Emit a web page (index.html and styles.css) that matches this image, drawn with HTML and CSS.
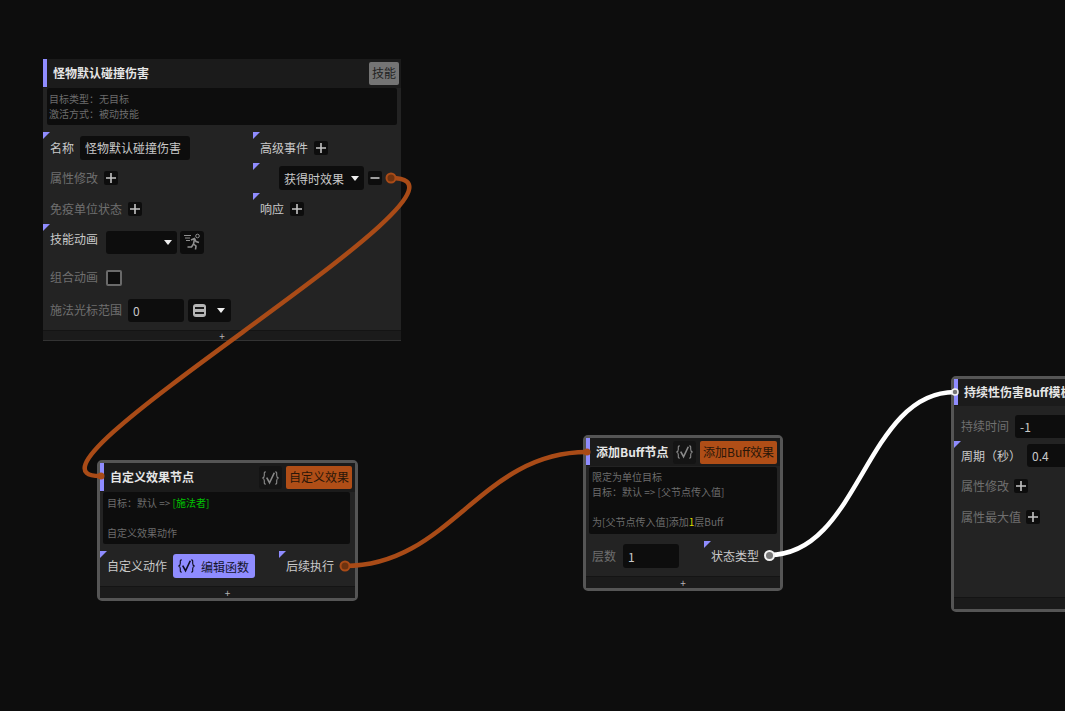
FILE: index.html
```html
<!DOCTYPE html>
<html lang="zh-CN">
<head>
 <meta charset="UTF-8">
 <meta name="viewport" content="width=device-width, initial-scale=1.0">
 <title>技能节点图</title>
 <link rel="stylesheet" href="styles.css">
</head>
<body>
 <svg class="defs" width="0" height="0">
  <symbol id="ico-plus" viewBox="0 0 14 14"><path d="M7 2v10M2 7h10" fill="none" stroke="currentColor" stroke-width="1.6"/></symbol>
  <symbol id="ico-minus" viewBox="0 0 14 14"><path d="M2.5 7h9" fill="none" stroke="currentColor" stroke-width="1.6"/></symbol>
  <symbol id="ico-func" viewBox="0 0 20 16">
   <path d="M5 1.5C3 1.5 3.5 3 3.5 5S3.5 7.500 1.500 8C3.500 8.500 3.500 9 3.500 11S3 14.500 5 14.500M15 1.500C17 1.500 16.500 3 16.500 5S16.500 7.500 18.500 8C16.500 8.500 16.500 9 16.500 11S17 14.500 15 14.500" fill="none" stroke="currentColor" stroke-width="1.2"/>
   <path d="M6 7.500L9 13L14 2.500" fill="none" stroke="currentColor" stroke-width="1.7"/>
  </symbol>
  <symbol id="ico-run" viewBox="0 0 18 18">
   <circle cx="14.500" cy="3" r="1.800" fill="none" stroke="currentColor" stroke-width="1"/>
   <path d="M1 2.500h7M2 5h5M3 7.500h4" fill="none" stroke="currentColor" stroke-width="1"/>
   <path d="M8 7L11.500 5.500L13 8.500L16 9.500M11.500 6L10.500 11L13 13L12.500 16.500M10.500 11L8.500 14L4.500 14" fill="none" stroke="currentColor" stroke-width="1.6"/>
  </symbol>
 </svg>

 <!-- 怪物默认碰撞伤害 -->
 <section class="node node-skill">
  <header class="head">
   <span class="accent"></span>
   <span class="title">怪物默认碰撞伤害</span>
   <span class="tag tag-grey">技能</span>
  </header>
  <div class="desc">
   <div>目标类型：无目标</div>
   <div>激活方式：被动技能</div>
  </div>
  <div class="skill-grid">
   <div class="field mark r1"><span class="label">名称</span><span class="box box-name">怪物默认碰撞伤害</span></div>
   <div class="field mark r1 col2"><span class="label">高级事件</span><span class="btn"><svg class="ico"><use href="#ico-plus"/></svg></span></div>
   <div class="field r2"><span class="label dim">属性修改</span><span class="btn"><svg class="ico"><use href="#ico-plus"/></svg></span></div>
   <div class="field mark r2 col2 event">
    <span class="box box-event">获得时效果<i class="caret"></i></span>
    <span class="btn"><svg class="ico"><use href="#ico-minus"/></svg></span>
   </div>
   <div class="field r3"><span class="label dim">免疫单位状态</span><span class="btn"><svg class="ico"><use href="#ico-plus"/></svg></span></div>
   <div class="field mark r3 col2"><span class="label">响应</span><span class="btn"><svg class="ico"><use href="#ico-plus"/></svg></span></div>
   <div class="field mark r4 wide">
    <span class="label anim-label">技能动画</span>
    <span class="box box-anim"><i class="caret"></i></span>
    <span class="box box-run"><svg class="ico-run"><use href="#ico-run"/></svg></span>
   </div>
   <div class="field r5 wide"><span class="label dim combo-label">组合动画</span><span class="check"></span></div>
   <div class="field r6 wide">
    <span class="label dim">施法光标范围</span>
    <span class="box box-num">0</span>
    <span class="box box-unit"><i class="unit-ico"></i><i class="caret"></i></span>
   </div>
  </div>
  <footer class="foot">+</footer>
 </section>

 <!-- 自定义效果节点 -->
 <section class="node framed node-custom">
  <header class="head">
   <span class="accent"></span>
   <span class="title">自定义效果节点</span>
   <span class="btn-func"><svg class="ico-func"><use href="#ico-func"/></svg></span>
   <span class="tag tag-orange">自定义效果</span>
  </header>
  <div class="desc">
   <div>目标：默认 =&gt; <em class="green">[施法者]</em></div>
   <div>&nbsp;</div>
   <div>自定义效果动作</div>
  </div>
  <div class="body-row">
   <div class="field mark"><span class="label">自定义动作</span>
    <span class="edit"><svg class="ico-func"><use href="#ico-func"/></svg>编辑函数</span></div>
   <div class="field mark out"><span class="label">后续执行</span></div>
  </div>
  <footer class="foot">+</footer>
 </section>

 <!-- 添加Buff节点 -->
 <section class="node framed node-buff">
  <header class="head">
   <span class="accent"></span>
   <span class="title">添加Buff节点</span>
   <span class="btn-func"><svg class="ico-func"><use href="#ico-func"/></svg></span>
   <span class="tag tag-orange">添加Buff效果</span>
  </header>
  <div class="desc">
   <div>限定为单位目标</div>
   <div>目标：默认 =&gt; [父节点传入值]</div>
   <div>&nbsp;</div>
   <div>为[父节点传入值]添加<em class="yellow">1</em>层Buff</div>
  </div>
  <div class="body-row">
   <div class="field"><span class="label dim">层数</span><span class="box box-layer">1</span></div>
   <div class="field mark out"><span class="label">状态类型</span></div>
  </div>
  <footer class="foot">+</footer>
 </section>

 <!-- 持续性伤害Buff模板，右边超出画面 -->
 <section class="node framed node-dot">
  <header class="head">
   <span class="accent"></span>
   <span class="title">持续性伤害Buff模板</span>
  </header>
  <div class="dot-body">
   <div class="field dot-r1"><span class="label dim">持续时间</span><span class="box box-long">-1</span></div>
   <div class="field mark dot-r2"><span class="label">周期（秒）</span><span class="box box-long">0.4</span></div>
   <div class="field dot-r3"><span class="label dim">属性修改</span><span class="btn"><svg class="ico"><use href="#ico-plus"/></svg></span></div>
   <div class="field dot-r3"><span class="label dim">属性最大值</span><span class="btn"><svg class="ico"><use href="#ico-plus"/></svg></span></div>
  </div>
  <footer class="foot"></footer>
 </section>

 <!-- 连线 -->
 <svg class="wires" width="1065" height="711">
  <path class="wire orange" d="M391 178C512 178 -10 476 100 476"/>
  <path class="wire orange" d="M345 566C450 566 480 452 587 452"/>
  <path class="wire white" d="M769 555C860 555 865 392 955 392"/>
  <circle class="port port-o" cx="391" cy="178" r="4.5"/>
  <circle class="port port-o" cx="345" cy="566" r="4.5"/>
  <circle class="pin-o" cx="101" cy="476" r="3.5"/>
  <circle class="pin-o" cx="587" cy="452" r="3.5"/>
  <circle class="port port-w" cx="769.5" cy="555.5" r="4.5"/>
  <circle class="port port-w small" cx="955" cy="392" r="3"/>
 </svg>
</body>
</html>
```

FILE: styles.css
```css
* { box-sizing: border-box; }
html, body { height: 100%; }
body {
 margin: 0;
 background: #0d0d0d;
 overflow: hidden;
 position: relative;
 font-family: "Noto Sans CJK SC", "Noto Sans", sans-serif;
 font-size: 12px;
 color: #c9c9c9;
}
em { font-style: normal; }
.defs { position: absolute; }
.wires { position: absolute; left: 0; top: 0; pointer-events: none; }
.wire { fill: none; stroke-width: 4.5; stroke-linecap: round; }
.orange { stroke: #a94b17; }
.white { stroke: #fff; }
.port { stroke-width: 2; }
.port-o { fill: #6e3310; stroke: #a94b17; }
.port-w { fill: #777; stroke: #f2f2f2; }
.small { stroke-width: 1.5; }
.pin-o { fill: #a94b17; }

/* 节点 */
.node {
 position: absolute;
 background: #232323;
 display: flex;
 flex-direction: column;
}
.framed { border: 3px solid #555; border-radius: 5px; }
.node-skill { left: 43px; top: 59px; width: 358px; height: 282px; border-radius: 2px; }
.node-custom { left: 97px; top: 460px; width: 261px; height: 141px; }
.node-buff { left: 583px; top: 435px; width: 200px; height: 156px; }
.node-dot { left: 951px; top: 376px; width: 300px; height: 236px; }

.head {
 display: flex;
 align-items: center;
 height: 29px;
 flex: none;
 background: #1b1b1b;
 padding-left: 10px;
 position: relative;
}
.accent { position: absolute; left: 0; top: 0; bottom: 1px; width: 4px; background: #8f8cff; }
.title { font-weight: 700; color: #e6e6e6; line-height: 16px; white-space: nowrap; flex: 1; margin-top: -1px; }
.tag { height: 23px; line-height: 22px; border-radius: 2px; padding: 0 3px; flex: none; margin-right: 3px; }
.tag-grey { background: #747474; color: #222; margin-right: 2px; }
.tag-orange { background: #b04e17; color: #2a1608; }
.btn-func {
 width: 23px; height: 23px; flex: none; margin-right: 4px; border-radius: 3px;
 background: #141414; color: #8a8a8a;
 display: flex; align-items: center; justify-content: center;
}
.ico-func { width: 19px; height: 16px; }

.desc {
 background: #0d0d0d;
 border-radius: 2px;
 font-size: 10px;
 line-height: 15px;
 color: #6c6c6c;
 padding: 3px 2px 2px 3px;
 flex: none;
}
.green { color: #00c400; }
.yellow { color: #dede00; }

.foot {
 margin-top: auto;
 height: 12px;
 flex: none;
 background: #1b1b1b;
 border-top: 1px solid #141414;
 text-align: center;
 font-size: 10px;
 line-height: 11px;
 color: #b5b5b5;
}
.node-skill .foot { height: 11px; line-height: 10px; border-bottom: 1px solid #333; }

/* 字段 */
.field { display: flex; align-items: center; gap: 6px; padding-left: 7px; position: relative; white-space: nowrap; }
.mark::before {
 content: "";
 position: absolute;
 left: 0;
 top: 0;
 border-top: 7px solid #8f8cff;
 border-right: 7px solid transparent;
}
.label { line-height: 18px; }
.dim { color: #6f6f6f; }
.box {
 display: flex; align-items: center;
 background: #0d0d0d;
 border-radius: 3px;
 height: 24px;
 padding: 0 5px;
 flex: none;
 color: #c9c9c9;
}
.btn {
 width: 14px; height: 14px; flex: none;
 background: #0d0d0d; border-radius: 2px;
 color: #c4c4c4;
 display: flex;
}
.ico { width: 14px; height: 14px; }
.caret {
 width: 0; height: 0; flex: none;
 border-top: 5px solid #eee;
 border-left: 4.5px solid transparent;
 border-right: 4.5px solid transparent;
}

/* 技能节点内部 */
.node-skill .desc { margin: 0 4px 3px 4px; height: 37px; padding-top: 3px; padding-left: 2px; }
.skill-grid {
 display: grid;
 padding-top: 4px;
 grid-template-columns: 210px 1fr;
 grid-template-rows: 31px 30px 31px 36px 36px 28px;
}
.col2 { grid-column: 2; }
.r1 { grid-row: 1; } .r2 { grid-row: 2; } .r3 { grid-row: 3; }
.r4 { grid-row: 4; } .r5 { grid-row: 5; } .r6 { grid-row: 6; }
.wide { grid-column: 1 / 3; }
.box-name { width: 110px; }
.box-event { margin-left: 19px; width: 85px; gap: 5px; height: 24px; justify-content: space-between; }
.event { gap: 4px; }
.box-anim { width: 71px; justify-content: flex-end; height: 23px; }
.anim-label { margin-top: -6px; }
.combo-label { margin-top: -3px; }
.r4 { gap: 3px; }
.r4 .label { margin-right: 5px; }
.box-run { width: 24px; height: 23px; padding: 0 3px; color: #8f8f8f; }
.ico-run { width: 18px; height: 18px; }
.check { width: 16px; height: 16px; border: 2px solid #6a6a6a; border-radius: 2px; background: #0d0d0d; margin-left: 2px; }
.box-num { width: 56px; height: 23px; }
.r6 { gap: 4px; }
.r6 .label { margin-right: 2px; }
.box-unit { width: 43px; height: 23px; justify-content: space-between; padding: 0 6px 0 5px; }
.unit-ico {
 width: 13px; height: 13px; border-radius: 3px; flex: none;
 background:
  linear-gradient(#1a1a1a, #1a1a1a) center 3px / 9px 2px no-repeat,
  linear-gradient(#1a1a1a, #1a1a1a) center 8px / 9px 2px no-repeat,
  #b5b5b5;
}

/* 底部一行 */
.body-row { display: flex; justify-content: space-between; flex: 1; padding-top: 7px; }
.body-row .field { height: 30px; align-self: flex-start; }
.node-custom .desc { margin: 0 5px 0 3px; height: 52px; padding: 3px 4px; }
.node-custom .field.out { width: 76px; }
.edit {
 display: flex; align-items: center; gap: 5px;
 width: 82px; height: 24px; padding-left: 4px;
 background: #8f8cff; color: #14142a; border-radius: 3px;
}
.edit .ico-func { color: #0d0d1f; }

.node-buff .head { height: 28px; }
.node-buff .desc { margin: 1px 3px 3px 3px; height: 67px; padding: 2px 2px 2px 3px; }
.node-buff .field.out { width: 76px; }
.box-layer { width: 56px; }
.node-buff .body-row { padding-top: 4px; }
.node-buff .body-row .field:first-child { padding-left: 6px; gap: 7px; height: 24px; margin-top: 3px; }

.node-dot .head { height: 27px; }
.dot-body { display: flex; flex-direction: column; }
.dot-r1 { height: 35px; padding-top: 5px; }
.dot-r2 { height: 29px; }
.dot-r3 { height: 31px; gap: 5px; }
.box-long { width: 200px; height: 23px; }
```
